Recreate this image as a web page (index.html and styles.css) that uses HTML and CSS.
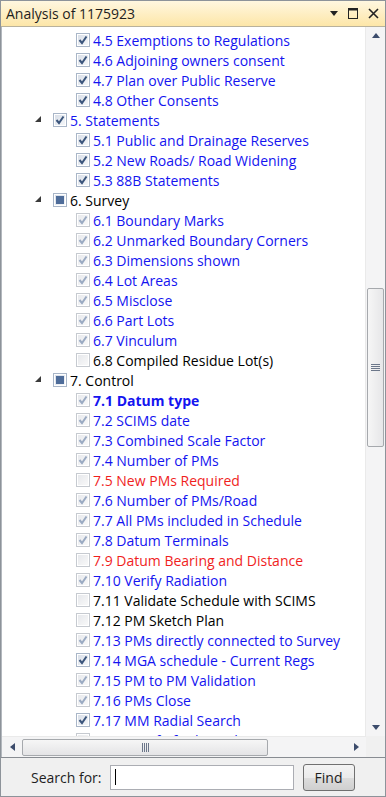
FILE: index.html
```html
<!DOCTYPE html>
<html lang="en">
<head>
  <meta charset="UTF-8">
  <meta name="viewport" content="width=device-width, initial-scale=1.0">
  <title>Analysis of 1175923</title>
  <link rel="stylesheet" href="styles.css">
</head>
<body>
  <div class="window">
    <div class="titlebar">
      <span class="title">Analysis of 1175923</span>
      <div class="title-buttons">
        <svg width="8" height="5" viewBox="0 0 8 5"><polygon points="0,0 8,0 4,5" fill="#222"/></svg>
        <svg width="10" height="11" viewBox="0 0 10 11"><rect x="0.5" y="0.5" width="9" height="10" fill="none" stroke="#222"/><rect x="0" y="0" width="10" height="2.5" fill="#222"/></svg>
        <svg width="11" height="11" viewBox="0 0 11 11"><path d="M1,1 L10,10 M10,1 L1,10" stroke="#222" stroke-width="1.6"/></svg>
      </div>
    </div>

    <div class="tree-area">
      <div class="tree">
        <ul class="nodes">
          <li class="row child"><span class="cb on"></span><span class="lbl blue">4.4 Easements and Restrictions</span></li>
          <li class="row child"><span class="cb on"></span><span class="lbl blue">4.5 Exemptions to Regulations</span></li>
          <li class="row child"><span class="cb on"></span><span class="lbl blue">4.6 Adjoining owners consent</span></li>
          <li class="row child"><span class="cb on"></span><span class="lbl blue">4.7 Plan over Public Reserve</span></li>
          <li class="row child"><span class="cb on"></span><span class="lbl blue">4.8 Other Consents</span></li>

          <li class="row parent"><span class="exp"></span><span class="cb on"></span><span class="lbl blue">5. Statements</span></li>
          <li class="row child"><span class="cb on"></span><span class="lbl blue">5.1 Public and Drainage Reserves</span></li>
          <li class="row child"><span class="cb on"></span><span class="lbl blue">5.2 New Roads/ Road Widening</span></li>
          <li class="row child"><span class="cb on"></span><span class="lbl blue">5.3 88B Statements</span></li>

          <li class="row parent"><span class="exp"></span><span class="cb part"></span><span class="lbl">6. Survey</span></li>
          <li class="row child"><span class="cb dim"></span><span class="lbl blue">6.1 Boundary Marks</span></li>
          <li class="row child"><span class="cb dim"></span><span class="lbl blue">6.2 Unmarked Boundary Corners</span></li>
          <li class="row child"><span class="cb dim"></span><span class="lbl blue">6.3 Dimensions shown</span></li>
          <li class="row child"><span class="cb dim"></span><span class="lbl blue">6.4 Lot Areas</span></li>
          <li class="row child"><span class="cb dim"></span><span class="lbl blue">6.5 Misclose</span></li>
          <li class="row child"><span class="cb dim"></span><span class="lbl blue">6.6 Part Lots</span></li>
          <li class="row child"><span class="cb dim"></span><span class="lbl blue">6.7 Vinculum</span></li>
          <li class="row child"><span class="cb off"></span><span class="lbl">6.8 Compiled Residue Lot(s)</span></li>

          <li class="row parent"><span class="exp"></span><span class="cb part"></span><span class="lbl">7. Control</span></li>
          <li class="row child"><span class="cb dim"></span><span class="lbl blue bold">7.1 Datum type</span></li>
          <li class="row child"><span class="cb dim"></span><span class="lbl blue">7.2 SCIMS date</span></li>
          <li class="row child"><span class="cb dim"></span><span class="lbl blue">7.3 Combined Scale Factor</span></li>
          <li class="row child"><span class="cb dim"></span><span class="lbl blue">7.4 Number of PMs</span></li>
          <li class="row child"><span class="cb off"></span><span class="lbl red">7.5 New PMs Required</span></li>
          <li class="row child"><span class="cb dim"></span><span class="lbl blue">7.6 Number of PMs/Road</span></li>
          <li class="row child"><span class="cb dim"></span><span class="lbl blue">7.7 All PMs included in Schedule</span></li>
          <li class="row child"><span class="cb dim"></span><span class="lbl blue">7.8 Datum Terminals</span></li>
          <li class="row child"><span class="cb off"></span><span class="lbl red">7.9 Datum Bearing and Distance</span></li>
          <li class="row child"><span class="cb dim"></span><span class="lbl blue">7.10 Verify Radiation</span></li>
          <li class="row child"><span class="cb off"></span><span class="lbl">7.11 Validate Schedule with SCIMS</span></li>
          <li class="row child"><span class="cb off"></span><span class="lbl">7.12 PM Sketch Plan</span></li>
          <li class="row child"><span class="cb dim"></span><span class="lbl blue">7.13 PMs directly connected to Survey</span></li>
          <li class="row child"><span class="cb on"></span><span class="lbl blue">7.14 MGA schedule - Current Regs</span></li>
          <li class="row child"><span class="cb dim"></span><span class="lbl blue">7.15 PM to PM Validation</span></li>
          <li class="row child"><span class="cb dim"></span><span class="lbl blue">7.16 PMs Close</span></li>
          <li class="row child"><span class="cb on"></span><span class="lbl blue">7.17 MM Radial Search</span></li>
          <li class="row child"><span class="cb dim"></span><span class="lbl blue">7.18 PMs fit for boundary</span></li>
        </ul>
      </div>

      <div class="vscroll">
        <div class="arrow"><svg width="8" height="5" viewBox="0 0 8 5"><polygon points="0,5 8,5 4,0" fill="#3c4c6c"/></svg></div>
        <div class="vtrack">
          <div class="vthumb"><span class="grip-h"></span></div>
        </div>
        <div class="arrow"><svg width="8" height="5" viewBox="0 0 8 5"><polygon points="0,0 8,0 4,5" fill="#3c4c6c"/></svg></div>
      </div>
    </div>

    <div class="hscroll-row">
      <div class="hscroll">
        <div class="arrow"><svg width="5" height="8" viewBox="0 0 5 8"><polygon points="5,0 5,8 0,4" fill="#3c4c6c"/></svg></div>
        <div class="htrack">
          <div class="hthumb"><span class="grip-v"></span></div>
        </div>
        <div class="arrow"><svg width="5" height="8" viewBox="0 0 5 8"><polygon points="0,0 0,8 5,4" fill="#3c4c6c"/></svg></div>
      </div>
      <div class="corner"></div>
    </div>

    <div class="searchbar">
      <label class="search-label" for="search">Search for:</label>
      <div class="search-box"><span class="caret"></span></div>
      <button class="find">Find</button>
    </div>
  </div>
</body>
</html>
```

FILE: styles.css
```css
body {
  margin: 0;
  font-family: "Open Sans", "Noto Sans", sans-serif;
  background: #fff;
}
.window {
  width: 386px;
  height: 797px;
  box-sizing: border-box;
  border: 1px solid #8d939a;
  display: flex;
  flex-direction: column;
  overflow: hidden;
}
.titlebar {
  height: 25px;
  flex-shrink: 0;
  display: flex;
  align-items: center;
  justify-content: space-between;
  padding: 0 6px 0 5px;
  background: linear-gradient(#fff7e0, #fde6a8);
  border-bottom: 1px solid #b9b29c;
}
.title {
  font-size: 14px;
  color: #1e1e1e;
}
.title-buttons {
  display: flex;
  align-items: center;
  gap: 10px;
}
.tree-area {
  height: 709px;
  flex-shrink: 0;
  display: flex;
  border-left: 1px solid #b3b8be;
}
.tree {
  flex: 1;
  overflow: hidden;
}
.nodes {
  list-style: none;
  margin: -17px 0 0;
  padding: 0;
}
.row {
  height: 20px;
  display: flex;
  align-items: center;
  font-size: 14px;
  white-space: nowrap;
  color: #000;
}
.row.parent {
  padding-left: 33px;
}
.row.child {
  padding-left: 74px;
}
.exp {
  width: 0;
  height: 0;
  border-style: solid;
  border-width: 0 0 6px 6px;
  border-color: transparent transparent #3a3a3a transparent;
  margin: 0 12px 2px 0;
}
.cb {
  width: 12px;
  height: 12px;
  border: 1px solid #a9b6c8;
  box-shadow: inset 0 0 0 1px #fff;
  background: linear-gradient(135deg, #dfe3e9, #f9fafb);
  margin-right: 3px;
  flex-shrink: 0;
  background-repeat: no-repeat;
}
.cb.on {
  background-image: url("data:image/svg+xml,%3Csvg xmlns='http://www.w3.org/2000/svg' width='12' height='12'%3E%3Cpath d='M2.5 6 L5 9 L9.5 2.5' fill='none' stroke='%233b557c' stroke-width='2'/%3E%3C/svg%3E"), linear-gradient(135deg, #d6dce6, #f7f9fb);
}
.cb.dim {
  border-color: #c6cad0;
  background-image: url("data:image/svg+xml,%3Csvg xmlns='http://www.w3.org/2000/svg' width='12' height='12'%3E%3Cpath d='M2.5 6 L5 9 L9.5 2.5' fill='none' stroke='%239aaac2' stroke-width='2'/%3E%3C/svg%3E"), linear-gradient(135deg, #e6e8ec, #fafafa);
}
.cb.off {
  border-color: #c6cad0;
  background: linear-gradient(135deg, #e4e6ea, #fafafa);
}
.cb.part {
  background-image: linear-gradient(#4e6c99, #4e6c99), linear-gradient(135deg, #d6dce6, #f7f9fb);
  background-size: 8px 8px, 100% 100%;
  background-position: center, 0 0;
}
.lbl.blue { color: #1414f0; }
.lbl.red { color: #f01e1e; }
.lbl.bold { font-weight: bold; }

.vscroll {
  width: 19px;
  flex-shrink: 0;
  display: flex;
  flex-direction: column;
  background: #f4f4f5;
  border-left: 1px solid #eaeaea;
}
.arrow {
  height: 17px;
  display: flex;
  align-items: center;
  justify-content: center;
  flex-shrink: 0;
}
.vtrack {
  flex: 1;
  padding-top: 244px;
}
.vthumb {
  height: 157px;
  margin: 0 1px;
  border: 1px solid #a6a9ad;
  border-radius: 2px;
  background: linear-gradient(90deg, #f6f6f6, #e6e6e8);
  display: flex;
  align-items: center;
  justify-content: center;
}
.grip-h {
  width: 9px;
  height: 7px;
  background: repeating-linear-gradient(#6c778a 0 1px, transparent 1px 2px);
}
.hscroll-row {
  height: 21px;
  flex-shrink: 0;
  display: flex;
  border-left: 1px solid #b3b8be;
}
.hscroll {
  flex: 1;
  display: flex;
  background: #f4f4f5;
  border-top: 1px solid #eaeaea;
}
.hscroll .arrow {
  width: 20px;
  height: auto;
}
.htrack {
  flex: 1;
  padding-right: 75px;
  display: flex;
}
.hthumb {
  width: 244px;
  margin: 2px 0 1px;
  border: 1px solid #a6a9ad;
  border-radius: 2px;
  background: linear-gradient(#f6f6f6, #e4e4e6);
  display: flex;
  align-items: center;
  justify-content: center;
}
.grip-v {
  width: 7px;
  height: 9px;
  background: repeating-linear-gradient(90deg, #6c778a 0 1px, transparent 1px 2px);
}
.corner {
  width: 19px;
  background: #f0f0f0;
}
.searchbar {
  flex: 1;
  display: flex;
  align-items: center;
  padding: 0 28px 0 30px;
  background: #f0f0f0;
  border-top: 1px solid #888c92;
}
.search-label {
  font-size: 14px;
  color: #1e1e1e;
  margin-right: 8px;
}
.search-box {
  width: 184px;
  height: 25px;
  border: 1px solid #abadb3;
  background: #fff;
  display: flex;
  align-items: center;
  padding-left: 4px;
  box-sizing: border-box;
  margin-right: 9px;
}
.caret {
  width: 1px;
  height: 16px;
  background: #000;
}
.find {
  width: 52px;
  height: 27px;
  border: 1px solid #707070;
  border-radius: 3px;
  background: linear-gradient(#f3f3f3 0%, #ebebeb 50%, #dddddd 51%, #cfcfcf 100%);
  font-family: "Open Sans", "Noto Sans", sans-serif;
  font-size: 14px;
  color: #1e1e1e;
  padding: 0;
}
```
